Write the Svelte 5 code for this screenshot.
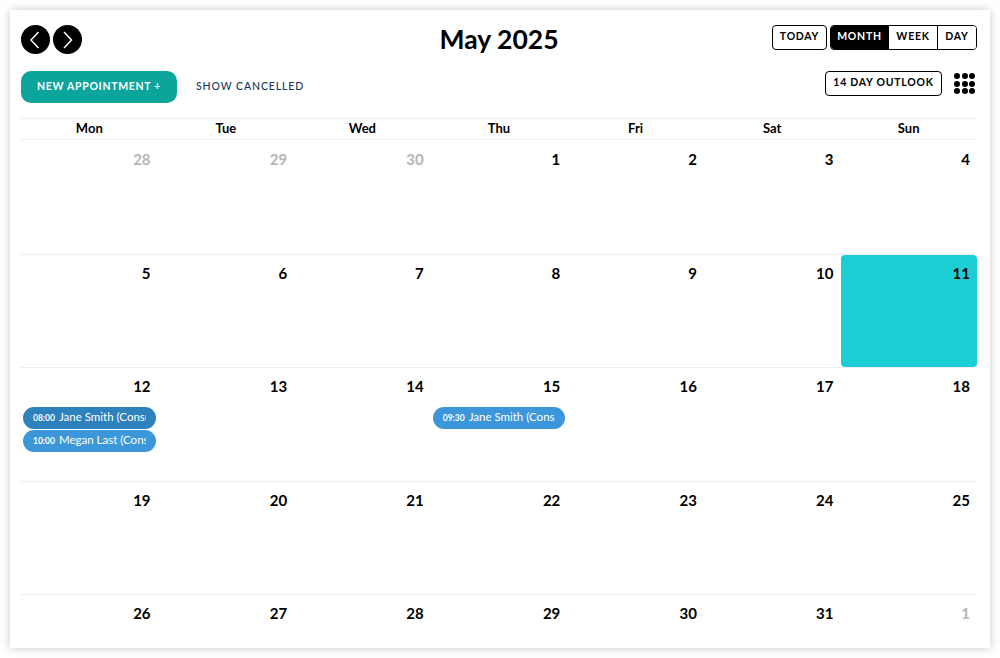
<script>
	const weekdays = ['Mon', 'Tue', 'Wed', 'Thu', 'Fri', 'Sat', 'Sun'];

	const weeks = [
		[[28, true], [29, true], [30, true], [1], [2], [3], [4]],
		[[5], [6], [7], [8], [9], [10], [11]],
		[[12], [13], [14], [15], [16], [17], [18]],
		[[19], [20], [21], [22], [23], [24], [25]],
		[[26], [27], [28], [29], [30], [31], [1, true]]
	];

	const appointments = {
		12: [
			{ time: '08:00', name: 'Jane Smith (Consultation)', dark: true },
			{ time: '10:00', name: 'Megan Last (Consultation)' }
		],
		15: [{ time: '09:30', name: 'Jane Smith (Consultation)' }]
	};
</script>

<main class="card">
	<header class="top-row">
		<div class="nav">
			<button type="button" class="circle" aria-label="Previous month">
				<svg viewBox="0 0 29 29" width="29" height="29" aria-hidden="true"><path d="M17.5 7 10 15l7.5 8" /></svg>
			</button>
			<button type="button" class="circle" aria-label="Next month">
				<svg viewBox="0 0 29 29" width="29" height="29" aria-hidden="true"><path d="M11 7l7.5 8-7.5 8" /></svg>
			</button>
		</div>
		<h1>May 2025</h1>
		<div class="views">
			<button type="button" class="outline">Today</button>
			<div class="segments">
				<button type="button" class="active">Month</button>
				<button type="button">Week</button>
				<button type="button">Day</button>
			</div>
		</div>
	</header>

	<div class="action-row">
		<button type="button" class="new-appt">New appointment +</button>
		<button type="button" class="show-cancelled">Show cancelled</button>
		<button type="button" class="outline outlook">14 day outlook</button>
		<div class="dots" aria-hidden="true">
			{#each Array(9) as _}<span></span>{/each}
		</div>
	</div>

	<div class="weekdays">
		{#each weekdays as day}<div>{day}</div>{/each}
	</div>

	<div class="weeks">
		{#each weeks as week}
			<div class="week">
				{#each week as [date, muted]}
					<div class="day" class:today={date === 11}>
						<div class="date" class:muted>{date}</div>
						{#if !muted && appointments[date]}
							<div class="events">
								{#each appointments[date] as appt}
									<div class="event" class:dark={appt.dark}>
										<span class="label"><b>{appt.time}</b>{appt.name}</span>
									</div>
								{/each}
							</div>
						{/if}
					</div>
				{/each}
			</div>
		{/each}
	</div>
</main>

<style>
	:global(body) {
		background: #fff;
		font-family: Lato, 'Noto Sans', sans-serif;
	}

	.card {
		box-sizing: border-box;
		height: 638px;
		margin: 10px;
		padding: 15px 13px 0 11px;
		overflow: hidden;
		background: #fff;
		box-shadow: 0 0 9px rgba(0, 0, 0, 0.22);
		color: #000;
	}

	button {
		font-family: inherit;
		cursor: pointer;
	}

	.top-row {
		display: grid;
		grid-template-columns: 1fr auto 1fr;
		align-items: start;
		height: 46px;
	}

	.nav {
		display: flex;
		gap: 3px;
	}

	.circle {
		width: 29px;
		height: 29px;
		padding: 0;
		border: 0;
		border-radius: 50%;
		background: #000;
	}

	.circle svg {
		display: block;
	}

	.circle path {
		fill: none;
		stroke: #fff;
		stroke-width: 1.5;
	}

	h1 {
		margin: 0;
		font-size: 26.5px;
		font-weight: 700;
		line-height: 29px;
	}

	.views {
		display: flex;
		justify-content: flex-end;
		gap: 3px;
	}

	.outline,
	.segments {
		box-sizing: border-box;
		height: 25px;
		border: 1px solid #000;
		border-radius: 4px;
		background: #fff;
	}

	.outline,
	.segments button {
		color: #000;
		font-size: 10.5px;
		font-weight: 700;
		letter-spacing: 0.75px;
		line-height: 21px;
		text-transform: uppercase;
	}

	.views > .outline {
		width: 55px;
		padding: 0 0 2px;
	}

	.segments {
		display: flex;
		width: 147px;
		overflow: hidden;
	}

	.segments button {
		padding: 0 0 2px;
		border: 0;
		border-left: 1px solid #000;
		background: #fff;
	}

	.segments button:nth-child(1) {
		width: 57px;
		border-left: 0;
	}

	.segments button:nth-child(2) {
		width: 49px;
	}

	.segments button:nth-child(3) {
		width: 39px;
	}

	.segments .active {
		background: #000;
		color: #fff;
	}

	.action-row {
		display: flex;
		align-items: flex-start;
		height: 47px;
	}

	.new-appt {
		width: 156px;
		height: 32px;
		padding: 0 0 2px;
		border: 0;
		border-radius: 10px;
		background: #0ba59c;
		color: #fff;
		font-size: 10.5px;
		font-weight: 700;
		letter-spacing: 0.7px;
		text-transform: uppercase;
	}

	.show-cancelled {
		height: 32px;
		margin-left: 19px;
		padding: 0 0 2px;
		border: 0;
		background: none;
		color: #17365d;
		font-size: 10.5px;
		font-weight: 500;
		letter-spacing: 0.9px;
		text-transform: uppercase;
	}

	.outlook {
		width: 117px;
		margin-left: auto;
		padding: 0 0 2px;
	}

	.dots {
		display: grid;
		grid-template-columns: repeat(3, 6px);
		gap: 1.5px;
		margin: 2px 2px 0 12px;
	}

	.dots span {
		width: 6px;
		height: 6px;
		border-radius: 50%;
		background: #000;
	}

	.weekdays,
	.week {
		display: grid;
		grid-template-columns: repeat(7, minmax(0, 1fr));
	}

	.weekdays {
		height: 20px;
		border-top: 1px solid #eee;
		border-bottom: 1px solid #eee;
		font-size: 13px;
		font-weight: 700;
		line-height: 19px;
		text-align: center;
	}

	.weeks {
		margin-top: 1px;
	}

	.week {
		box-sizing: border-box;
		height: 113.5px;
		border-bottom: 1px solid #eee;
	}

	.week:last-child {
		border-bottom: 0;
	}

	.day {
		min-width: 0;
		border-radius: 4px;
	}

	.day.today {
		margin-left: 1px;
		background: #1ccdd3;
	}

	.date {
		padding: 8px 7px 0 0;
		font-size: 15px;
		font-weight: 700;
		line-height: 20px;
		text-align: right;
	}

	.date.muted {
		color: #b5b5b5;
	}

	.events {
		display: grid;
		grid-template-columns: minmax(0, 1fr);
		gap: 1px;
		margin-top: 11px;
		padding: 0 2px;
	}

	.event {
		box-sizing: border-box;
		height: 22px;
		padding: 0 10px;
		border-radius: 11px;
		background: #3b97da;
		color: #fff;
		font-size: 11.5px;
		line-height: 20px;
	}

	.event.dark {
		background: #2d81bd;
	}

	.label {
		display: block;
		overflow: hidden;
		white-space: nowrap;
	}

	.label b {
		margin-right: 4px;
		font-size: 8.5px;
	}
</style>
